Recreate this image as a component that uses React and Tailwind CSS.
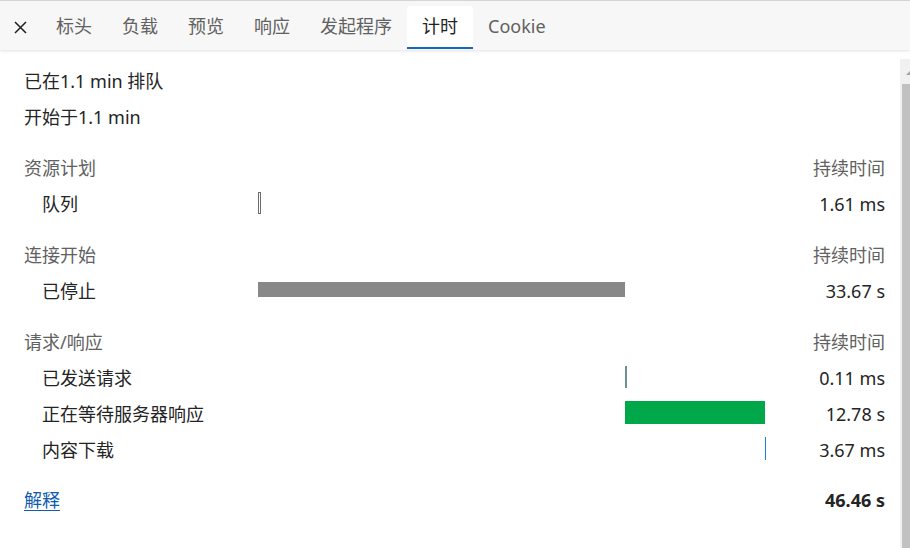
import React from 'react';

const tabs = ['标头', '负载', '预览', '响应', '发起程序', '计时', 'Cookie'];

const sections = [
  {
    title: '资源计划',
    rows: [
      { label: '队列', dur: '1.61 ms', bar: { left: 0, width: 3, cls: 'h-[22px] border border-[#6b6b6b] bg-white' } },
    ],
  },
  {
    title: '连接开始',
    rows: [
      { label: '已停止', dur: '33.67 s', bar: { left: 0, width: 367, cls: 'h-[15px] bg-[#888888]' } },
    ],
  },
  {
    title: '请求/响应',
    rows: [
      { label: '已发送请求', dur: '0.11 ms', bar: { left: 367, width: 2, cls: 'h-[22px] bg-[#6f9091]' } },
      { label: '正在等待服务器响应', dur: '12.78 s', bar: { left: 367, width: 140, cls: 'h-[23px] bg-[#00a84a]' } },
      { label: '内容下载', dur: '3.67 ms', bar: { left: 507, width: 1, cls: 'h-[23px] bg-[#1a7fd0]' } },
    ],
  },
];

const TimingRow = ({ row }) => (
  <div className="flex items-center h-[36px]">
    <div className="w-[234px] pl-[18px] text-[#242424]">{row.label}</div>
    <div className="w-[520px] h-full flex items-center">
      <div
        className={'shrink-0 mb-[3px] ' + row.bar.cls}
        style={{ marginLeft: row.bar.left, width: row.bar.width }}
      />
    </div>
    <div className="flex-1 text-right text-[#242424]">{row.dur}</div>
  </div>
);

export default function App() {
  return (
    <div
      className="w-[910px] h-[548px] overflow-hidden bg-white flex flex-col text-[18px]"
      style={{ fontFamily: '"Noto Sans", "Noto Sans CJK SC", sans-serif' }}
    >
      {/* tab strip */}
      <div className="h-[50px] shrink-0 border-t border-[#d4d4d4] bg-[#f7f7f7] flex items-end pb-[1px] relative z-10 shadow-[0_1px_3px_rgba(0,0,0,0.12)]">
        <div className="w-[41px] h-[43px] flex items-center justify-center pb-[1px]">
          <svg width="13" height="13" viewBox="0 0 13 13">
            <path d="M1 1 L12 12 M12 1 L1 12" stroke="#1f1f1f" strokeWidth="1.5" />
          </svg>
        </div>
        {tabs.map((t) => (
          <div
            key={t}
            className={
              t === '计时'
                ? 'h-[43px] px-[15px] flex items-center bg-white rounded-t-[4px] border-b-2 border-[#0f6cbd] text-[#242424]'
                : 'h-[43px] px-[15px] flex items-center border-b-2 border-transparent text-[#616161]'
            }
          >
            {t}
          </div>
        ))}
      </div>

      <div className="flex-1 flex min-h-0">
        <div className="flex-1 pl-[24px] pr-[15px] pt-[13px] text-[#242424]">
          <div className="h-[36px] leading-[36px]">已在1.1 min 排队</div>
          <div className="h-[36px] leading-[36px]">开始于1.1 min</div>

          {sections.map((s) => (
            <div key={s.title} className="mt-[15px]">
              <div className="flex items-center h-[36px] text-[#616161]">
                <div className="flex-1">{s.title}</div>
                <div>持续时间</div>
              </div>
              {s.rows.map((r) => (
                <TimingRow key={r.label} row={r} />
              ))}
            </div>
          ))}

          <div className="mt-[14px] flex items-center h-[36px]">
            <a href="#" className="flex-1 text-[#0f5cad] underline underline-offset-[3px]">
              <span>解释</span>
            </a>
            <div className="font-bold text-[#242424]">46.46 s</div>
          </div>
        </div>

        {/* scrollbar */}
        <div className="w-[10px] mt-[9px] bg-[#f1f1f1] flex flex-col">
          <div className="h-[25px] relative">
            <div className="absolute right-0 top-[12px] w-0 h-0 border-l-[4px] border-r-[4px] border-b-[4px] border-l-transparent border-r-transparent border-b-[#a3a3a3] translate-x-[4px]" />
          </div>
          <div className="flex-1 ml-[2px] bg-[#c1c1c1]" />
        </div>
      </div>
    </div>
  );
}
